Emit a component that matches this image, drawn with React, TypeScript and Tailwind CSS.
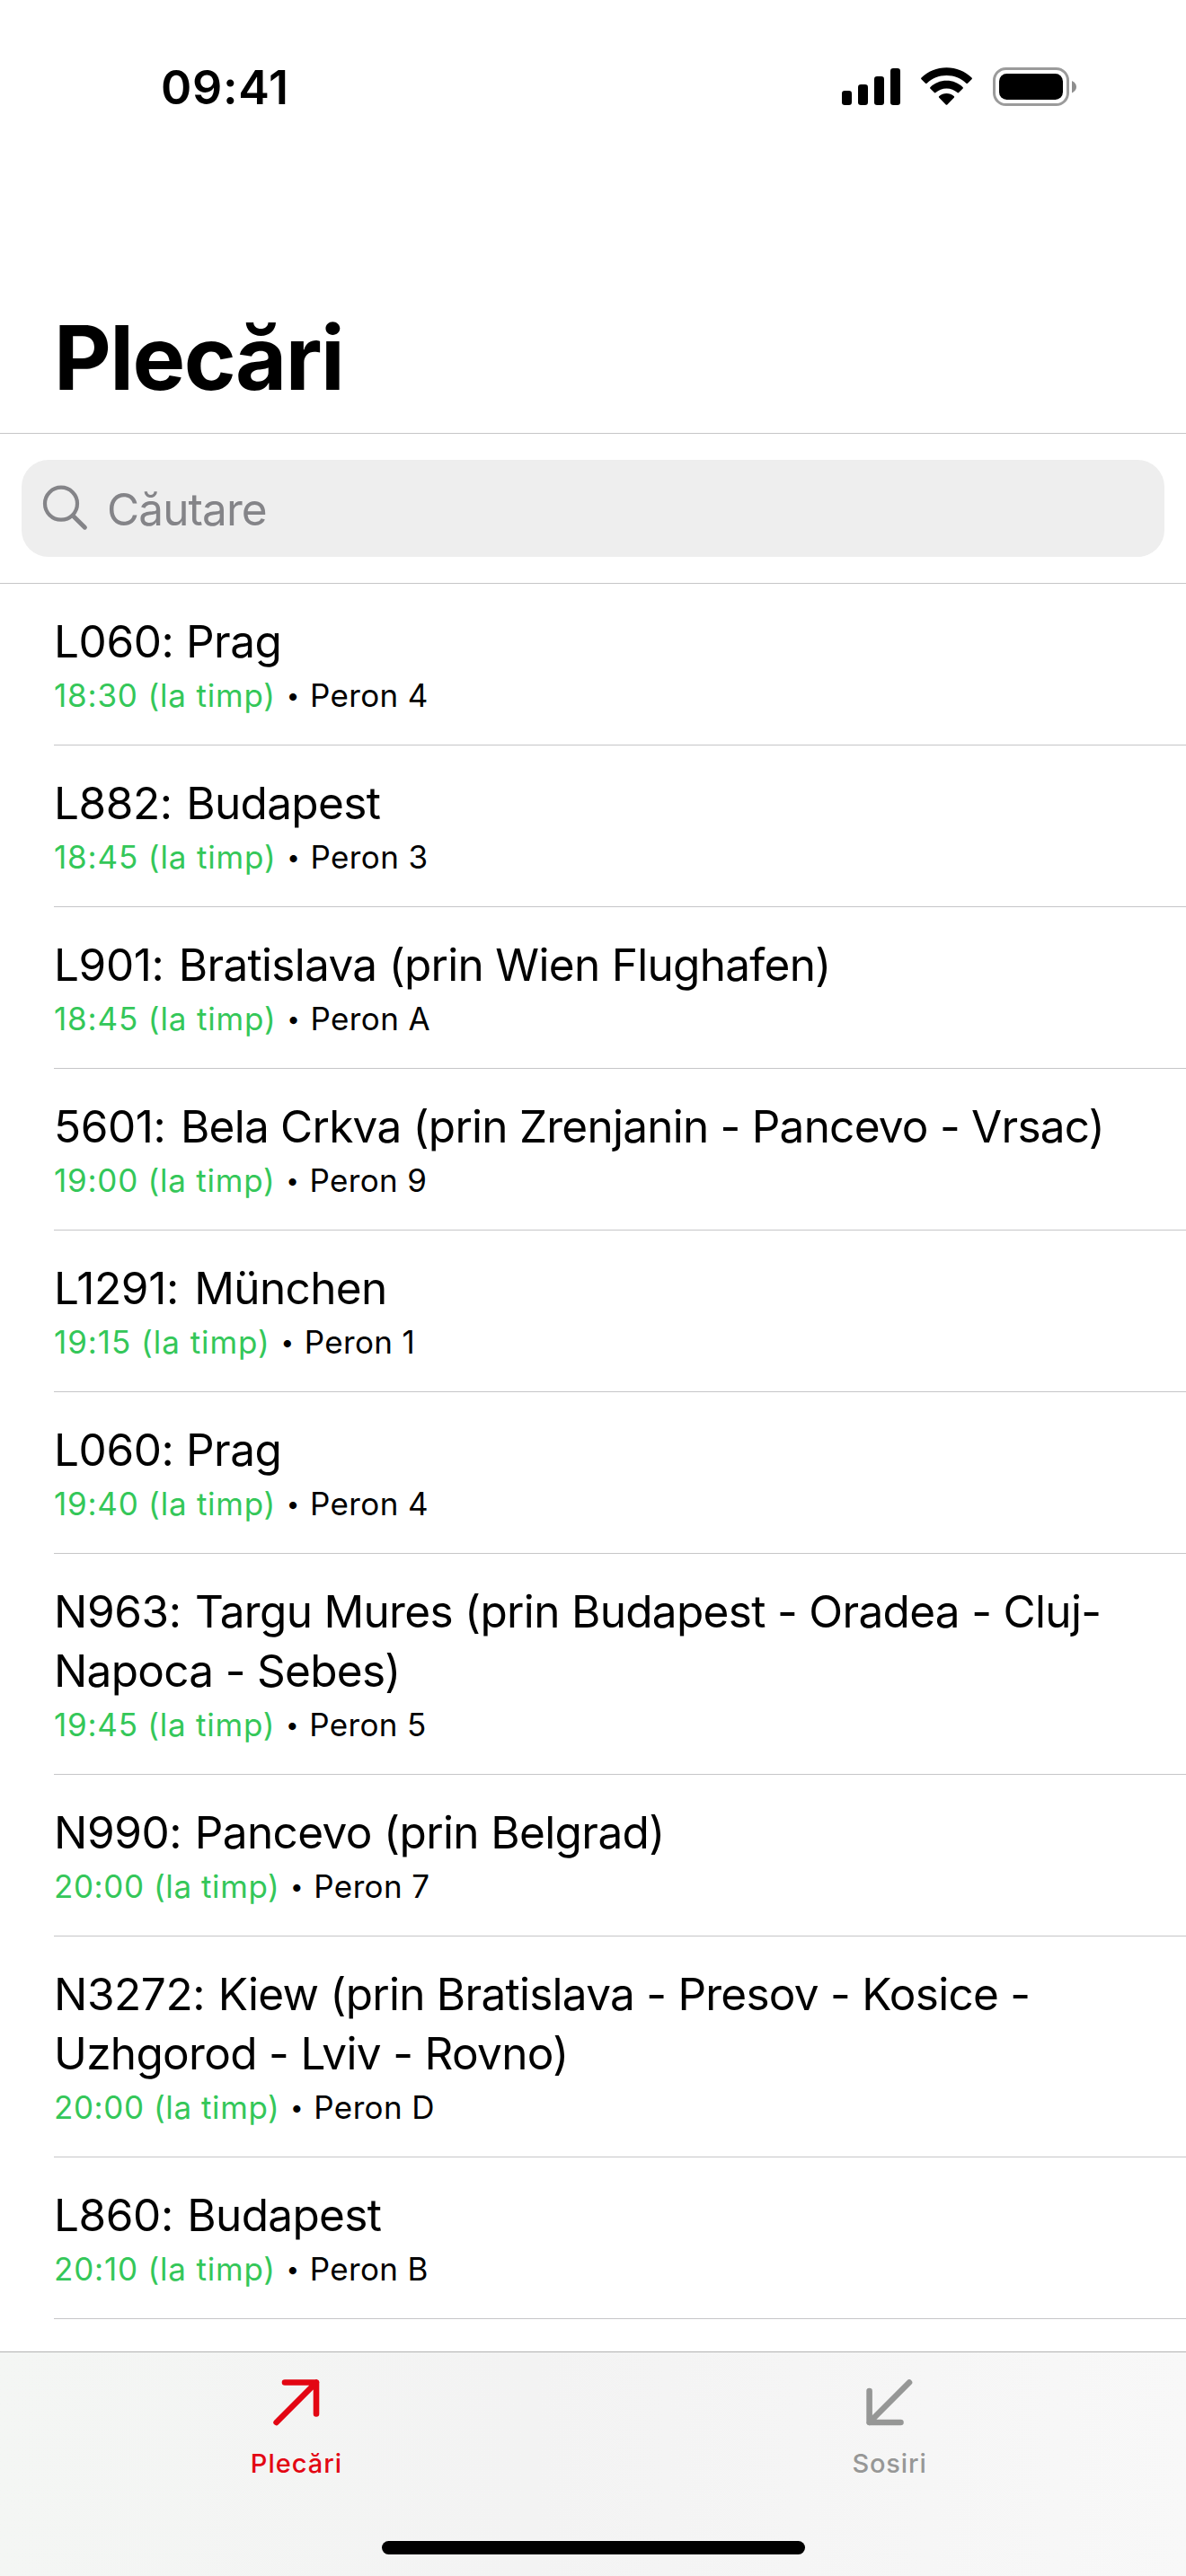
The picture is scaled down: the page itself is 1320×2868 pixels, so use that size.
type Departure = {
  code: string;
  codeSpacing: string;
  lines: { text: string; tracking: string }[];
  time: string;
  timeTracking: string;
  platform: string;
};

const departures: Departure[] = [
  {
    code: "L060:",
    codeSpacing: "",
    lines: [{ text: "Prag", tracking: "tracking-[-0.47px]" }],
    time: "18:30",
    timeTracking: "tracking-[0.82px]",
    platform: "4",
  },
  {
    code: "L882:",
    codeSpacing: "mr-[2px]",
    lines: [{ text: "Budapest", tracking: "tracking-[-0.66px]" }],
    time: "18:45",
    timeTracking: "tracking-[0.85px]",
    platform: "3",
  },
  {
    code: "L901:",
    codeSpacing: "mr-[3px]",
    lines: [{ text: "Bratislava (prin Wien Flughafen)", tracking: "tracking-[-0.7px]" }],
    time: "18:45",
    timeTracking: "tracking-[0.85px]",
    platform: "A",
  },
  {
    code: "5601:",
    codeSpacing: "mr-[3px]",
    lines: [{ text: "Bela Crkva (prin Zrenjanin - Pancevo - Vrsac)", tracking: "tracking-[-0.76px]" }],
    time: "19:00",
    timeTracking: "tracking-[0.76px]",
    platform: "9",
  },
  {
    code: "L1291:",
    codeSpacing: "mr-[4px]",
    lines: [{ text: "München", tracking: "tracking-[-0.65px]" }],
    time: "19:15",
    timeTracking: "tracking-[0.95px]",
    platform: "1",
  },
  {
    code: "L060:",
    codeSpacing: "",
    lines: [{ text: "Prag", tracking: "tracking-[-0.47px]" }],
    time: "19:40",
    timeTracking: "tracking-[0.76px]",
    platform: "4",
  },
  {
    code: "N963:",
    codeSpacing: "mr-[2px]",
    lines: [
      { text: "Targu Mures (prin Budapest - Oradea - Cluj-", tracking: "tracking-[-0.68px]" },
      { text: "Napoca - Sebes)", tracking: "tracking-[-0.7px]" },
    ],
    time: "19:45",
    timeTracking: "tracking-[0.76px]",
    platform: "5",
  },
  {
    code: "N990:",
    codeSpacing: "mr-[1px]",
    lines: [{ text: "Pancevo (prin Belgrad)", tracking: "tracking-[-0.62px]" }],
    time: "20:00",
    timeTracking: "tracking-[0.58px]",
    platform: "7",
  },
  {
    code: "N3272:",
    codeSpacing: "mr-[1px]",
    lines: [
      { text: "Kiew (prin Bratislava - Presov - Kosice -", tracking: "tracking-[-0.74px]" },
      { text: "Uzhgorod - Lviv - Rovno)", tracking: "tracking-[-0.68px]" },
    ],
    time: "20:00",
    timeTracking: "tracking-[0.58px]",
    platform: "D",
  },
  {
    code: "L860:",
    codeSpacing: "mr-[2px]",
    lines: [{ text: "Budapest", tracking: "tracking-[-0.66px]" }],
    time: "20:10",
    timeTracking: "tracking-[0.8px]",
    platform: "B",
  },
];

function StatusBar() {
  return (
    <div className="flex h-[130px] items-start justify-between pl-[179px] pr-[121px] pt-[66px]">
      <span className="text-[52px] font-semibold leading-[64px] tracking-[0.7px]">09:41</span>
      <div className="flex items-start pt-[9px]">
        <svg width="66" height="43" viewBox="0 0 66 43" aria-hidden="true">
          <rect x="0" y="26" width="11" height="16" rx="3.2" />
          <rect x="18" y="19" width="11" height="23" rx="3.2" />
          <rect x="36" y="10" width="11" height="32" rx="3.2" />
          <rect x="54" y="1" width="11" height="41" rx="3.2" />
        </svg>
        <svg className="ml-[22px]" width="58" height="43" viewBox="0 0 58 43" aria-hidden="true">
          <path d="M28.5 0.3C17.6 0.3 7.9 4.500 0.500 11.400c-.6.6-.6 1.200 0 1.800l4.500 4.500c.5.5 1.100.5 1.600 0C12.300 12.300 20 9 28.500 9s16.200 3.300 21.900 8.700c.5.5 1.100.5 1.600 0l4.500-4.500c.6-.6.6-1.200 0-1.800C49.100 4.500 39.400.3 28.500.3Z" />
          <path d="M28.500 14.800c-7 0-13.300 2.700-18 7.100-.6.6-.6 1.200 0 1.800l4.400 4.400c.5.5 1.100.5 1.600 0 3.200-2.900 7.400-4.700 12-4.700s8.800 1.800 12 4.700c.5.5 1.100.5 1.600 0l4.400-4.400c.6-.6.6-1.200 0-1.800-4.700-4.400-11-7.100-18-7.100Z" />
          <path d="M28.500 29c-3.100 0-6 1.100-8.200 3-.6.5-.6 1.200-.1 1.700l7.500 7.700c.5.5 1.100.5 1.600 0l7.500-7.700c.5-.5.5-1.200-.1-1.700-2.200-1.900-5.100-3-8.200-3Z" />
        </svg>
        <svg className="ml-[22px]" width="94" height="43" viewBox="0 0 94 43" aria-hidden="true">
          <rect x="1.500" y="1.500" width="82" height="40" rx="13" fill="none" stroke="#9b9b9b" strokeWidth="3" />
          <rect x="7" y="7" width="71" height="29" rx="8.500" />
          <path d="M88 15v13.500c2.900-1.200 5-3.700 5-6.750S90.900 16.200 88 15Z" fill="#8e8e8e" />
        </svg>
      </div>
    </div>
  );
}

function SearchBar() {
  return (
    <div className="h-[168px] border-y border-[#c6c6c8] px-6 pt-[29px]">
      <div className="flex h-[108px] items-center rounded-[30px] bg-[#eeeeee] pl-[23px] text-[#848488]">
        <svg width="52" height="52" viewBox="0 0 52 52" fill="none" stroke="currentColor" strokeLinecap="round" aria-hidden="true">
          <circle cx="21" cy="20.700" r="18" strokeWidth="4.200" />
          <path d="M34.500 34.500 47.400 47.200" strokeWidth="5" />
        </svg>
        <span className="ml-[20px] pt-px text-[49.5px] leading-[66px] tracking-[-0.9px]">Căutare</span>
      </div>
    </div>
  );
}

function DepartureRow({ item }: { item: Departure }) {
  return (
    <li className="ml-[60px] border-b border-[#c6c6c8] pb-[28px] pt-[31px]">
      {item.lines.map((line, index) => (
        <p key={line.text} className={`whitespace-nowrap text-[49.5px] leading-[66px] ${line.tracking}`}>
          {index === 0 && <span className={`tracking-[-0.4px] ${item.codeSpacing}`}>{item.code} </span>}
          {line.text}
        </p>
      ))}
      <p className="flex h-[54px] whitespace-nowrap text-[35px] leading-[54px]">
        <span className={`text-[#34c759] ${item.timeTracking}`}>{item.time} (la timp)</span>
        <span className="w-[38px] text-center text-[26px] leading-[56px]">•</span>
        <span className="tracking-[0.35px]">Peron {item.platform}</span>
      </p>
    </li>
  );
}

function TabBar() {
  return (
    <nav className="flex h-[250px] shrink-0 flex-col items-center border-t border-[#b2b2b2] bg-linear-to-r from-[#f4f6f4] via-[#f3f3f3] via-45% to-[#f8f8f8] pt-[30px]">
      <div className="flex w-full">
        <div className="flex w-1/2 flex-col items-center text-[#e30613]">
          <svg width="52" height="52" viewBox="0 0 52 52" fill="none" stroke="currentColor" strokeWidth="6.600" strokeLinecap="round" strokeLinejoin="round" aria-hidden="true">
            <path d="M13 3.500H48V38.500M48 3.500 3.600 48" />
          </svg>
          <span className="mt-[24px] text-[29px] font-medium leading-[36px] tracking-[1px]">Plecări</span>
        </div>
        <div className="flex w-1/2 flex-col items-center text-[#969796]">
          <svg width="52" height="52" viewBox="0 0 52 52" fill="none" stroke="currentColor" strokeWidth="6.600" strokeLinecap="round" strokeLinejoin="round" aria-hidden="true">
            <path d="M3.600 13V48H38.500M3.600 48 48 3.500" />
          </svg>
          <span className="mt-[24px] text-[29px] font-medium leading-[36px] tracking-[0.85px]">Sosiri</span>
        </div>
      </div>
      <div className="mt-[68px] h-[15px] w-[471px] rounded-full bg-black" />
    </nav>
  );
}

export default function App() {
  return (
    <div className="flex h-[2868px] w-[1320px] flex-col overflow-hidden bg-white font-['Inter',sans-serif] text-black">
      <header className="h-[482px] shrink-0">
        <StatusBar />
        <h1 className="ml-[60px] mt-[208px] text-[98.6px] font-bold leading-[120px] tracking-[-1.55px]">Plecări</h1>
      </header>
      <SearchBar />
      <ul className="min-h-0 flex-1 overflow-hidden">
        {departures.map((item, index) => (
          <DepartureRow key={index} item={item} />
        ))}
      </ul>
      <TabBar />
    </div>
  );
}
